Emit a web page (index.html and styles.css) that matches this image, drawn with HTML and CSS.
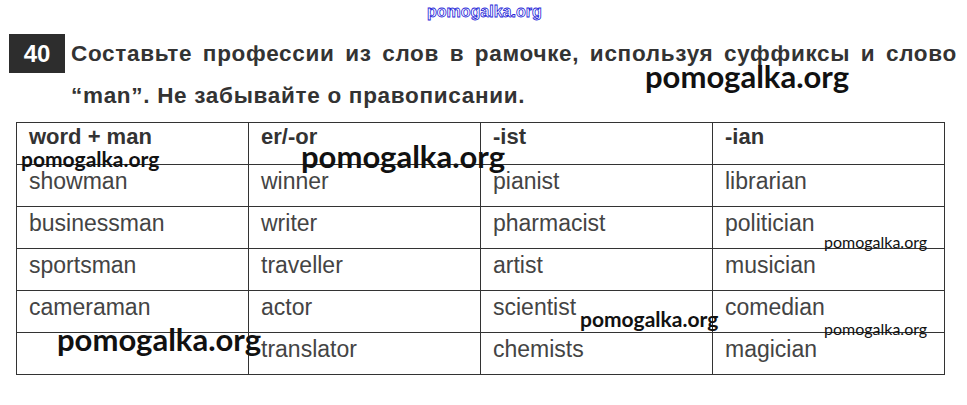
FILE: index.html
```html
<!DOCTYPE html>
<html lang="ru">
<head>
<meta charset="utf-8">
<title>Задание 40</title>
<link rel="stylesheet" href="styles.css">
</head>
<body>
<div class="page">
  <div class="site-mark">pomogalka.org</div>
  <div class="task">
    <div class="badge">40</div>
    <p class="title">Составьте профессии из слов в рамочке, используя суффиксы и слово “man”. Не забывайте о правописании.</p>
  </div>
  <table class="words">
    <thead>
      <tr><th>word + man</th><th>er/-or</th><th>-ist</th><th>-ian</th></tr>
    </thead>
    <tbody>
      <tr><td>showman</td><td>winner</td><td>pianist</td><td>librarian</td></tr>
      <tr><td>businessman</td><td>writer</td><td>pharmacist</td><td>politician</td></tr>
      <tr><td>sportsman</td><td>traveller</td><td>artist</td><td>musician</td></tr>
      <tr><td>cameraman</td><td>actor</td><td>scientist</td><td>comedian</td></tr>
      <tr><td></td><td>translator</td><td>chemists</td><td>magician</td></tr>
    </tbody>
  </table>
  <span class="wm wm-big wm-1">pomogalka.org</span>
  <span class="wm wm-mid wm-2">pomogalka.org</span>
  <span class="wm wm-big wm-3">pomogalka.org</span>
  <span class="wm wm-small wm-4">pomogalka.org</span>
  <span class="wm wm-mid wm-5">pomogalka.org</span>
  <span class="wm wm-small wm-6">pomogalka.org</span>
  <span class="wm wm-big wm-7">pomogalka.org</span>
</div>
</body>
</html>
```
FILE: styles.css
```css
html, body {
  margin: 0;
  padding: 0;
  background: #ffffff;
}

.page {
  position: relative;
  width: 967px;
  height: 405px;
  overflow: hidden;
  font-family: "Liberation Sans", Arial, sans-serif;
}

.site-mark {
  position: absolute;
  left: 427px;
  top: 2px;
  font-family: "Liberation Sans", Arial, sans-serif;
  font-weight: bold;
  font-size: 16px;
  line-height: 20px;
  color: #ffffff;
  -webkit-text-stroke: 0.8px #2525d8;
}

.task {
  display: flex;
  align-items: flex-start;
  padding: 34px 0 0 9px;
}

.badge {
  flex: none;
  width: 56px;
  height: 39px;
  background: #2d2d2d;
  color: #ffffff;
  font-weight: bold;
  font-size: 24px;
  line-height: 39px;
  text-align: center;
}

.title {
  margin: -1px 0 0 6px;
  width: 886px;
  font-size: 22.5px;
  font-weight: bold;
  line-height: 42px;
  letter-spacing: 0.7px;
  color: #333333;
  text-align: justify;
}

.words {
  margin: 5px 0 0 16px;
  border-collapse: collapse;
  width: 929px;
  table-layout: fixed;
  color: #444444;
  font-size: 23px;
}

.words th,
.words td {
  border: 1px solid #333333;
  height: 42px;
  padding: 4px 12px 0;
  vertical-align: top;
  text-align: left;
  line-height: 24px;
  box-sizing: border-box;
}

.words th {
  font-weight: bold;
  color: #333333;
  font-size: 22px;
  padding-top: 2px;
}

.wm {
  position: absolute;
  font-family: Lato, "Open Sans", sans-serif;
  color: #111111;
  line-height: 1;
  white-space: nowrap;
}

.wm-big { font-size: 31px; font-weight: bold; }
.wm-mid { font-size: 21px; font-weight: bold; }
.wm-small { font-size: 16px; font-weight: normal; }

.wm-1 { left: 645px; top: 61px; }
.wm-2 { left: 21px; top: 148px; }
.wm-3 { left: 301px; top: 141px; }
.wm-4 { left: 824px; top: 234px; }
.wm-5 { left: 580px; top: 308px; }
.wm-6 { left: 824px; top: 321px; }
.wm-7 { left: 57px; top: 324px; }
```
